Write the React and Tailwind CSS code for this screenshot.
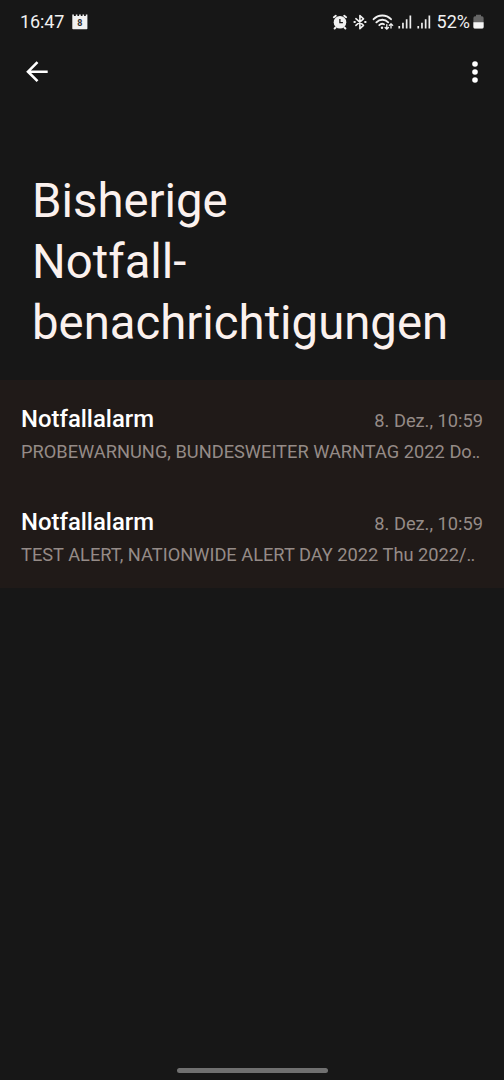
import React from "react";

const alerts = [
  { title: "Notfallalarm", date: "8. Dez., 10:59", text: "PROBEWARNUNG, BUNDESWEITER WARNTAG 2022 Do" },
  { title: "Notfallalarm", date: "8. Dez., 10:59", text: "TEST ALERT, NATIONWIDE ALERT DAY 2022 Thu 2022/" },
];

function CalendarIcon() {
  return (
    <svg className="ml-2 h-4 w-4" viewBox="0 0 16 16">
      <path d="M.3.500h1.600v1.500h1.900V.500h1.600v1.500h1.700V.500h1.700v1.500h1.700V.500h1.600v1.500h1.700V.500h1.600V14.500a.8.8 0 0 1-.8.8H1.100a.8.8 0 0 1-.8-.8Z" fill="#f1f1f1" />
      <text x="7.800" y="11.700" textAnchor="middle" fontSize="9" fontWeight="700" fill="#303030">8</text>
    </svg>
  );
}

function AlarmIcon() {
  return (
    <svg className="h-4 w-4" viewBox="0 0 16 16">
      <g stroke="#f1f1f1" strokeWidth="2" strokeLinecap="round">
        <path d="M1.900 3.200 3.800 1.800M14.100 3.200 12.200 1.800M3.600 13.500l-1 1M12.400 13.500l1 1" />
      </g>
      <circle cx="8" cy="8.200" r="6.300" fill="#f1f1f1" />
      <path d="M7.900 4.900v3.700h3" fill="none" stroke="#181818" strokeWidth="1.300" />
    </svg>
  );
}

function BluetoothIcon() {
  return (
    <svg className="ml-1 h-4 w-4" viewBox="0 0 16 16" fill="none" stroke="#f1f1f1" strokeWidth="1.600" strokeLinejoin="round" strokeLinecap="round">
      <path d="m3.900 4.700 7.600 6.600L7.900 14.700V1.500l3.600 3.400-7.600 6.500" />
      <path d="M2.300 8h.7M13 8h.7" strokeWidth="1.800" />
    </svg>
  );
}

function WifiIcon() {
  return (
    <svg className="ml-1 h-[18px] w-[22px]" viewBox="0 0 22 18" fill="none" stroke="#f1f1f1" strokeWidth="1.900" strokeLinecap="round">
      <path d="M1.600 6.200C6.400 1.200 14.200 1.200 19 6.200M4.400 9.300c3.300-3.500 8.500-3.500 11.800 0M7.300 12.200c1.500-1.500 3.300-1.700 4.700-.9" />
      <circle cx="10" cy="14.700" r="1.200" fill="#f1f1f1" stroke="none" />
      <path d="M14.800 11.600v4.400m-1.700-1.500 1.700 1.700 1.700-1.700M19 15v-4.300m-1.700 1.700 1.700-1.700 1.700 1.700" strokeWidth="1.300" />
    </svg>
  );
}

function SignalIcon({ className }) {
  return (
    <svg className={className} viewBox="0 0 14 16" fill="#ededed">
      <path d="M.4 12h1.700V14.500H.4zM4.100 8.700h1.700v5.800H4.100zM7.800 5.200h1.700v9.300H7.800zM11.500 1.500h1.700v13h-1.700z" />
    </svg>
  );
}

function BatteryIcon() {
  return (
    <svg className="ml-[3px] h-4 w-[11px]" viewBox="0 0 11 16">
      <path d="M3 .700h5v1.600h1A1.600 1.600 0 0 1 10.600 3.900v9A1.600 1.600 0 0 1 9 14.600H2A1.600 1.600 0 0 1 .4 13V3.900A1.600 1.600 0 0 1 2 2.300h1Z" fill="#666" />
      <path d="M.4 8.200h10.200V13A1.600 1.600 0 0 1 9 14.600H2A1.600 1.600 0 0 1 .4 13Z" fill="#f5f5f5" />
    </svg>
  );
}

export default function App() {
  return (
    <div className="flex h-[1080px] w-[504px] flex-col overflow-hidden bg-[#171717] font-[Roboto,sans-serif] text-white">
      <header className="flex h-11 shrink-0 items-center justify-between pl-5 pr-[20px] text-lg text-[#f1f1f1]">
        <div className="flex items-center">
          <span className="tracking-[-0.1px]">16:47</span>
          <CalendarIcon />
        </div>
        <div className="flex items-center">
          <AlarmIcon />
          <BluetoothIcon />
          <WifiIcon />
          <SignalIcon className="ml-[4px] h-4 w-[14px]" />
          <SignalIcon className="ml-[5px] h-4 w-[14px]" />
          <span className="ml-[6px]">52%</span>
          <BatteryIcon />
        </div>
      </header>

      <nav className="flex h-14 shrink-0 items-center justify-between pl-[25px] pr-[17px]">
        <button aria-label="Zurück">
          <svg className="h-6 w-6" viewBox="0 0 24 24" fill="none" stroke="#fff" strokeWidth="2.600">
            <path d="M22.700 11.700H3M12.500 2.200 3 11.700l9.500 9.500" />
          </svg>
        </button>
        <button aria-label="Optionen">
          <svg className="h-6 w-6" viewBox="0 0 24 24" fill="#fff">
            <circle cx="12" cy="4" r="2.800" />
            <circle cx="12" cy="12" r="2.800" />
            <circle cx="12" cy="20" r="2.800" />
          </svg>
        </button>
      </nav>

      <h1 className="mt-[71px] h-[209px] shrink-0 pl-8 text-[47.3px] leading-[61px] text-[#fbf1ee]">
        Bisherige
        <br />
        Notfall-
        <br />
        benachrichtigungen
      </h1>

      <main className="h-[207.5px] shrink-0 bg-[#201a18]">
        {alerts.map((alert) => (
          <article key={alert.text} className="h-[103.5px] pl-[21px] pr-[21px] pt-[23.5px]">
            <div className="flex items-baseline justify-between">
              <h2 className="text-[23.9px] font-medium leading-[30px]">{alert.title}</h2>
              <time className="text-[18.25px] text-[#958b87]">{alert.date}</time>
            </div>
            <p className="whitespace-nowrap text-[18.25px] leading-[36.4px] text-[#958b87]">
              {alert.text}
              <span className="tracking-[-1px]">..</span>
            </p>
          </article>
        ))}
      </main>

      <footer className="mt-auto flex h-3 shrink-0 items-start justify-center">
        <div className="h-[5px] w-[151px] rounded-full bg-[#707070]" />
      </footer>
    </div>
  );
}
